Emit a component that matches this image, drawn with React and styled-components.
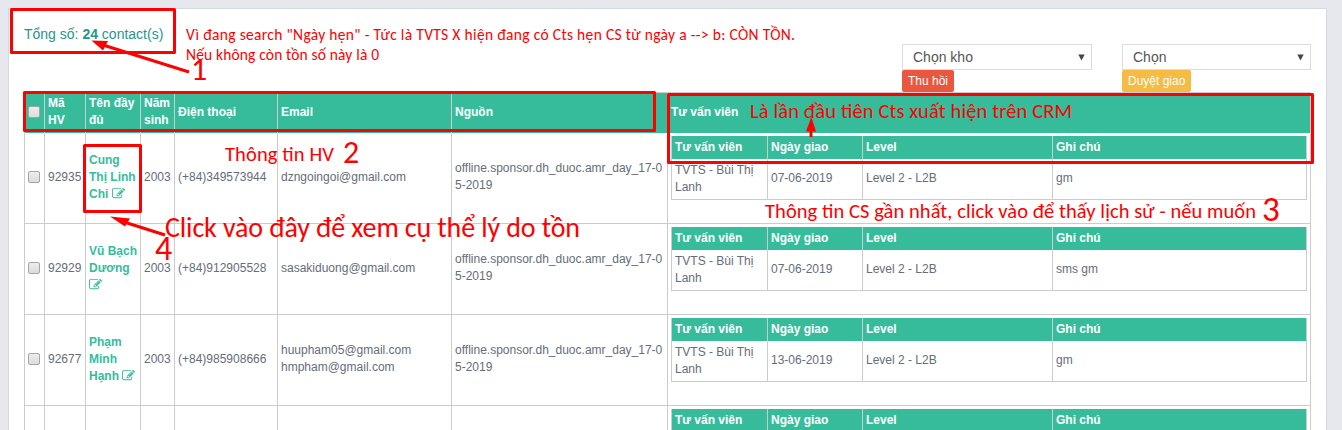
import React from "react";
import styled, { createGlobalStyle } from "styled-components";

const GlobalStyle = createGlobalStyle`
  * { box-sizing: border-box; }
  body {
    margin: 0;
    background: #e7e8ee;
    color: #656d78;
    font: 12px/17px "Liberation Sans", Arial, sans-serif;
    overflow: hidden;
  }
`;

const Page = styled.div`
  position: relative;
  height: 430px;
  padding: 8px 15px 0 8px;
  overflow: hidden;
`;

const Panel = styled.main`
  height: 520px;
  padding: 0 15px;
  background: #fff;
  border: 1px solid #d5d9e3;
`;

const Toolbar = styled.header`
  display: flex;
  height: 83px;
`;

const Total = styled.div`
  flex: 1;
  padding-top: 15px;
  color: #26968a;
  font-size: 14px;
  line-height: 20px;
`;

const Action = styled.div`
  display: flex;
  flex-direction: column;
  align-items: flex-start;
  width: ${(p) => p.$width}px;
  margin: 35px 0 0 ${(p) => p.$gap || 0}px;
`;

const SelectBox = styled.div`
  display: flex;
  align-items: center;
  justify-content: space-between;
  width: 100%;
  height: 26px;
  padding: 0 6px 0 10px;
  border: 1px solid #dcdcdc;
  color: #555;
  font-size: 14px;
`;

const Caret = styled.svg`
  width: 7px;
  height: 7px;
  fill: #444;
`;

const Button = styled.button`
  height: 22px;
  padding: 0 6px;
  border: 0;
  border-radius: 2px;
  background: ${(p) => p.$color};
  color: #fff;
  font: 12px/22px "Liberation Sans", Arial, sans-serif;
  white-space: nowrap;
`;

const Table = styled.section`
  width: 1287px;
  border-top: 1px solid #ccc;
`;

const Cell = styled.div`
  display: flex;
  align-items: center;
  min-width: 0;
  padding: 0 3px 2px;
  border-left: 1px solid #ccc;
  &:last-child { border-right: 1px solid #ccc; }
`;

const SourceCell = styled(Cell)`
  word-break: break-all;
`;

const DetailCell = styled(Cell)`
  align-items: flex-start;
  padding: 3px 3px 0;
`;

const Row = styled.div`
  display: grid;
  grid-template-columns: 20px 41px 55px 34px 103px 174px 216px 644px;
  height: 91px;
  border-bottom: 1px solid #ccc;
`;

const HeadRow = styled(Row)`
  height: 40px;
  border-bottom: 0;
  background: #37bc9b;
  color: #fff;
  font-weight: bold;
`;

const Checkbox = styled.input.attrs({ type: "checkbox" })`
  appearance: none;
  width: 12px;
  height: 12px;
  margin: 0;
  border: 1px solid #a6a6a6;
  border-radius: 2px;
  background: linear-gradient(#ededed, #dcdcdc);
`;

const Name = styled.a`
  color: #37bc9b;
  font-weight: bold;
`;

const EditIcon = styled.svg`
  width: 13px;
  height: 13px;
  vertical-align: -2px;
  fill: currentColor;
`;

const Detail = styled.div`
  width: 636px;
  border-right: 1px solid #ccc;
`;

const DetailRow = styled.div`
  display: grid;
  grid-template-columns: 96px 95px 190px 254px;
  height: 41px;
  border-bottom: 1px solid #ccc;
`;

const DetailItem = styled.div`
  display: flex;
  align-items: center;
  padding: 0 3px 2px;
  border-left: 1px solid #ccc;
  &:first-child { padding-bottom: 1px; }
`;

const DetailHead = styled(DetailRow)`
  height: 23px;
  border-bottom: 0;
  background: #37bc9b;
  color: #fff;
  font-weight: bold;
  ${DetailItem} { padding-bottom: 1px; }
`;

const Notes = styled.svg`
  position: absolute;
  inset: 0;
  width: 1342px;
  height: 430px;
  pointer-events: none;
  fill: #f00;
  font-family: Carlito, Lato, "Open Sans", sans-serif;
`;

const Frame = styled.rect`
  fill: none;
  stroke: #f00;
  stroke-width: 3px;
  stroke-linejoin: round;
`;

const Shaft = styled.line`
  stroke: #f00;
  stroke-width: 3px;
`;

const contacts = [
  { id: "92935", name: "Cung Thị Linh Chi", phone: "(+84)349573944", email: ["dzngoingoi@gmail.com"], date: "07-06-2019", note: "gm" },
  { id: "92929", name: "Vũ Bạch Dương", phone: "(+84)912905528", email: ["sasakiduong@gmail.com"], date: "07-06-2019", note: "sms gm" },
  { id: "92677", name: "Phạm Minh Hạnh", phone: "(+84)985908666", email: ["huupham05@gmail.com", "hmpham@gmail.com"], date: "13-06-2019", note: "gm" },
  {},
];

const notes = [
  { x: 186, y: 40, w: 609, size: 15.5, text: 'Vì đang search "Ngày hẹn" - Tức là TVTS X hiện đang có Cts hẹn CS từ ngày a --> b: CÒN TỒN.' },
  { x: 186, y: 59.5, w: 193, size: 15.5, text: "Nếu không còn tồn số này là 0" },
  { x: 191, y: 80, w: 16, size: 32, text: "1" },
  { x: 750, y: 117.5, w: 322, size: 20.5, text: "Là lần đầu tiên Cts xuất hiện trên CRM" },
  { x: 225, y: 161, w: 109, size: 20.5, text: "Thông tin HV" },
  { x: 343, y: 163, w: 16, size: 32, text: "2" },
  { x: 165, y: 237, w: 415, size: 28, text: "Click vào đây để xem cụ thể lý do tồn" },
  { x: 155, y: 260, w: 17, size: 34, text: "4" },
  { x: 765, y: 217.5, w: 491, size: 20.5, text: "Thông tin CS gần nhất, click vào để thấy lịch sử - nếu muốn" },
  { x: 1262, y: 221, w: 17, size: 35, text: "3" },
];

const Edit = () => (
  <EditIcon viewBox="0 0 1792 1792">
    <path d="M888 1184l116-116-152-152-116 116v56h96v96h56zm440-720q-16-16-33 1l-350 350q-17 17-1 33t33-1l350-350q17-17 1-33zm80 594v190q0 119-84.5 203.5t-203.5 84.5h-832q-119 0-203.5-84.5t-84.5-203.5v-832q0-119 84.5-203.5t203.5-84.5h832q63 0 117 25 15 7 18 23 3 17-9 29l-49 49q-14 14-32 8-23-6-45-6h-832q-66 0-113 47t-47 113v832q0 66 47 113t113 47h832q66 0 113-47t47-113v-126q0-13 9-22l64-64q15-15 35-7t20 29zm-96-738l288 288-672 672h-288v-288zm444 132l-92 92-288-288 92-92q28-28 68-28t68 28l152 152q28 28 28 68t-28 68z" />
  </EditIcon>
);

const Select = ({ children }) => (
  <SelectBox>
    {children}
    <Caret viewBox="0 0 7 7"><path d="M0.3 0.5h6.4L3.5 6.5z" /></Caret>
  </SelectBox>
);

const Assignment = ({ date, note }) => (
  <Detail>
    <DetailHead>
      <DetailItem>Tư vấn viên</DetailItem>
      <DetailItem>Ngày giao</DetailItem>
      <DetailItem>Level</DetailItem>
      <DetailItem>Ghi chú</DetailItem>
    </DetailHead>
    {date && (
      <DetailRow>
        <DetailItem>TVTS - Bùi Thị Lanh</DetailItem>
        <DetailItem>{date}</DetailItem>
        <DetailItem>Level 2 - L2B</DetailItem>
        <DetailItem>{note}</DetailItem>
      </DetailRow>
    )}
  </Detail>
);

const ContactRow = ({ contact }) => (
  <Row>
    <Cell>{contact.id && <Checkbox />}</Cell>
    <Cell>{contact.id}</Cell>
    <Cell>{contact.name && <Name>{contact.name} <Edit /></Name>}</Cell>
    <Cell>{contact.id && "2003"}</Cell>
    <Cell>{contact.phone}</Cell>
    <Cell><div>{(contact.email || []).map((m) => <div key={m}>{m}</div>)}</div></Cell>
    <SourceCell>{contact.id && "offline.sponsor.dh_duoc.amr_day_17-05-2019"}</SourceCell>
    <DetailCell><Assignment date={contact.date} note={contact.note} /></DetailCell>
  </Row>
);

export default function App() {
  return (
    <Page>
      <GlobalStyle />
      <Panel>
        <Toolbar>
          <Total>Tổng số: <b>24</b> contact(s)</Total>
          <Action $width={190}>
            <Select>Chọn kho</Select>
            <Button $color="#e9573f">Thu hồi</Button>
          </Action>
          <Action $width={189} $gap={30}>
            <Select>Chọn</Select>
            <Button $color="#f6bb42">Duyệt giao</Button>
          </Action>
        </Toolbar>
        <Table>
          <HeadRow>
            <Cell><Checkbox /></Cell>
            <Cell>Mã HV</Cell>
            <Cell>Tên đầy đủ</Cell>
            <Cell>Năm sinh</Cell>
            <Cell>Điện thoại</Cell>
            <Cell>Email</Cell>
            <Cell>Nguồn</Cell>
            <Cell>Tư vấn viên</Cell>
          </HeadRow>
          {contacts.map((c, i) => <ContactRow key={i} contact={c} />)}
        </Table>
      </Panel>
      <Notes viewBox="0 0 1342 430">
        <Frame x="11.5" y="9.5" width="163" height="43" />
        <Frame x="24.5" y="92.5" width="630" height="38" />
        <Frame x="668.5" y="94.5" width="644" height="68" />
        <Frame x="84.5" y="145.5" width="56" height="66" />
        <Shaft x1="189" y1="72" x2="103" y2="45" />
        <path d="M91.5 40.5L108 41L103 50.5z" />
        <Shaft x1="165" y1="235" x2="124" y2="222" />
        <path d="M110 216.5L130 218.5L125 226.5z" />
        <Shaft x1="811" y1="137" x2="811" y2="128" />
        <path d="M811.3 117L816 131.5H806z" />
        {notes.map((n) => (
          <text key={n.text} x={n.x} y={n.y} fontSize={n.size} textLength={n.w}>{n.text}</text>
        ))}
      </Notes>
    </Page>
  );
}
